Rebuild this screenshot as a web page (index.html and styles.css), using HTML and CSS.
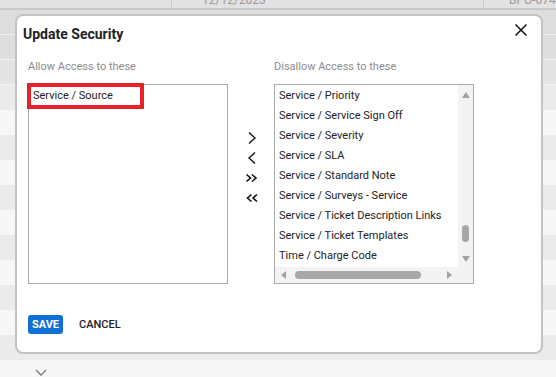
FILE: index.html
```html
<!DOCTYPE html>
<html lang="en">
<head>
    <meta charset="UTF-8">
    <meta name="viewport" content="width=device-width, initial-scale=1.0">
    <title>Update Security</title>
    <link rel="stylesheet" href="styles.css">
</head>
<body>
    <!-- table behind the modal -->
    <div class="grid-bg">
        <div class="grid-head">
            <div class="cell cell-a"></div>
            <div class="cell cell-b">12/12/2023</div>
            <div class="cell cell-c">BPO-0747</div>
        </div>
        <div class="grid-row dark"></div>
        <div class="grid-row dark"></div>
        <div class="grid-row mid"></div>
        <div class="grid-row odd"></div>
        <div class="grid-row even"></div>
        <div class="grid-row odd"></div>
        <div class="grid-row even"></div>
        <div class="grid-row odd"></div>
        <div class="grid-row even"></div>
        <div class="grid-row odd"></div>
        <div class="grid-row even"></div>
        <div class="grid-row odd"></div>
        <div class="grid-row even"></div>
        <div class="grid-row odd"></div>
        <div class="grid-foot">
            <svg width="12" height="7" viewBox="0 0 12 7"><path d="M1 1l5 5 5-5" fill="none" stroke="#7a7a7a" stroke-width="1.3"/></svg>
        </div>
    </div>

    <div class="dialog">
        <div class="dialog-head">
            <div class="dialog-title">Update Security</div>
            <button class="close-btn" aria-label="Close">
                <svg width="14" height="14" viewBox="0 0 14 14"><path d="M1.5 1.5l11 11M12.5 1.5l-11 11" stroke="#111" stroke-width="1.5"/></svg>
            </button>
        </div>

        <div class="transfer">
            <div class="col-label">Allow Access to these</div>
            <div></div>
            <div class="col-label">Disallow Access to these</div>

            <div class="list-box allow">
                <div class="list-item selected">Service / Source</div>
            </div>

            <div class="move-btns">
                <button class="move-btn"><svg width="10" height="14" viewBox="0 0 10 14"><path d="M2 1.5l6 5.5-6 5.5" fill="none" stroke="#111" stroke-width="1.4"/></svg></button>
                <button class="move-btn"><svg width="10" height="14" viewBox="0 0 10 14"><path d="M8 1.5l-6 5.5 6 5.5" fill="none" stroke="#111" stroke-width="1.4"/></svg></button>
                <button class="move-btn"><svg width="14" height="10" viewBox="0 0 14 10"><path d="M1.5 1.5l4 3.5-4 3.5M7 1.5l4 3.5-4 3.5" fill="none" stroke="#111" stroke-width="1.6"/></svg></button>
                <button class="move-btn"><svg width="14" height="10" viewBox="0 0 14 10"><path d="M6.5 1.5l-4 3.5 4 3.5M12 1.5l-4 3.5 4 3.5" fill="none" stroke="#111" stroke-width="1.6"/></svg></button>
            </div>

            <div class="list-box disallow">
                <div class="list-scroll">
                    <div class="list-item">Service / Priority</div>
                    <div class="list-item">Service / Service Sign Off</div>
                    <div class="list-item">Service / Severity</div>
                    <div class="list-item">Service / SLA</div>
                    <div class="list-item">Service / Standard Note</div>
                    <div class="list-item">Service / Surveys - Service</div>
                    <div class="list-item">Service / Ticket Description Links</div>
                    <div class="list-item">Service / Ticket Templates</div>
                    <div class="list-item">Time / Charge Code</div>
                </div>
                <div class="vbar">
                    <span class="tri up"></span>
                    <div class="vtrack"><span class="vthumb"></span></div>
                    <span class="tri down"></span>
                </div>
                <div class="hbar">
                    <span class="tri left"></span>
                    <div class="htrack"><span class="hthumb"></span></div>
                    <span class="tri right"></span>
                </div>
                <div class="corner"></div>
            </div>
        </div>

        <div class="dialog-actions">
            <button class="btn-save">SAVE</button>
            <button class="btn-cancel">CANCEL</button>
        </div>
    </div>
</body>
</html>
```

FILE: styles.css
```css
* {
    margin: 0;
    padding: 0;
    box-sizing: border-box;
}

body {
    font-family: Roboto, 'Liberation Sans', Arial, sans-serif;
    width: 556px;
    height: 377px;
    overflow: hidden;
    position: relative;
    background: #f7f7f7;
    color: #222;
}

button {
    font-family: inherit;
    background: none;
    border: none;
    cursor: pointer;
}

/* background table */
.grid-bg {
    display: flex;
    flex-direction: column;
}

.grid-head {
    height: 10px;
    flex-shrink: 0;
    display: flex;
    background: #e2e2e2;
    border-bottom: 2px solid #c9c9c9;
    overflow: hidden;
}

.cell {
    font-size: 12px;
    line-height: 14px;
    color: #9a9a9a;
    margin-top: -7px;
    border-right: 1px solid #cbcbcb;
    padding-left: 30px;
    flex-shrink: 0;
    white-space: nowrap;
}

.cell-a { width: 172px; }
.cell-b { width: 312px; }
.cell-c { flex: 1; border-right: none; padding-left: 25px; }

.grid-row {
    height: 25px;
    flex-shrink: 0;
    border-bottom: 1px solid #f1f1f1;
}

.grid-row.dark { background: #dedede; }
.grid-row.mid { background: #e4e4e4; }
.grid-row.odd { background: #ebebeb; border-bottom: none; }
.grid-row.even { background: #f7f7f7; border-bottom: none; }

.grid-foot {
    height: 30px;
    flex-shrink: 0;
    background: #f7f7f7;
    padding: 9px 0 0 35px;
}

.grid-foot svg {
    display: block;
}

/* modal */
.dialog {
    position: absolute;
    left: 15px;
    top: 14px;
    width: 528px;
    height: 340px;
    background: #fff;
    border: 2px solid #c3c3c3;
    border-radius: 8px;
}

.dialog-head {
    display: flex;
    justify-content: space-between;
    align-items: flex-start;
    margin-top: 7px;
    padding: 0 13px 0 6px;
}

.dialog-title {
    font-size: 14px;
    font-weight: 700;
    line-height: 20px;
    margin-top: 1px;
    color: #222;
}

.close-btn {
    width: 14px;
    height: 14px;
    display: flex;
}

.transfer {
    display: grid;
    grid-template-columns: 200px 46px 200px;
    row-gap: 10px;
    margin-top: 16px;
    padding-left: 11px;
}

.col-label {
    font-size: 11px;
    line-height: 14px;
    color: #8c8c8c;
}

.list-box {
    height: 200px;
    border: 1px solid #ababab;
    font-size: 11px;
}

.list-item {
    line-height: 20px;
    height: 20px;
    padding-left: 4px;
    white-space: nowrap;
    color: #222;
}

.allow .list-item.selected {
    width: 109px;
    height: 18px;
    line-height: 18px;
    margin: 2px;
    padding-left: 2px;
    outline: 4px solid #e8202a;
}

.move-btns {
    display: flex;
    flex-direction: column;
    align-items: center;
    padding-top: 44px;
}

.move-btn {
    height: 20px;
    width: 20px;
    display: flex;
    align-items: center;
    justify-content: center;
    margin-left: 1px;
}

.disallow {
    display: grid;
    grid-template-columns: 1fr 15px;
    grid-template-rows: 1fr 16px;
}

.list-scroll {
    overflow: hidden;
    padding-top: 1px;
}

.vbar {
    background: #f3f3f3;
    display: flex;
    flex-direction: column;
    align-items: center;
    padding: 7px 0 5px;
}

.vtrack {
    flex: 1;
    position: relative;
    width: 7px;
}

.vthumb {
    position: absolute;
    left: 0;
    top: 127px;
    width: 7px;
    height: 17px;
    border-radius: 4px;
    background: #a8a8a8;
}

.hbar {
    background: #f3f3f3;
    display: flex;
    align-items: center;
    padding: 0 6px 0 6px;
}

.htrack {
    flex: 1;
    position: relative;
    height: 8px;
}

.hthumb {
    position: absolute;
    top: 0;
    left: 9px;
    width: 126px;
    height: 8px;
    border-radius: 4px;
    background: #a8a8a8;
}

.corner {
    background: #f3f3f3;
}

.tri {
    width: 0;
    height: 0;
    display: block;
}

.tri.up {
    border-left: 4px solid transparent;
    border-right: 4px solid transparent;
    border-bottom: 6px solid #a3a3a3;
}

.tri.down {
    border-left: 4px solid transparent;
    border-right: 4px solid transparent;
    border-top: 6px solid #a3a3a3;
}

.tri.left {
    border-top: 4px solid transparent;
    border-bottom: 4px solid transparent;
    border-right: 5px solid #a3a3a3;
}

.tri.right {
    border-top: 4px solid transparent;
    border-bottom: 4px solid transparent;
    border-left: 5px solid #a3a3a3;
}

.dialog-actions {
    display: flex;
    align-items: center;
    gap: 16px;
    margin-top: 31px;
    padding-left: 11px;
}

.btn-save {
    width: 35px;
    height: 19px;
    border-radius: 3px;
    background: #1170d6;
    color: #fff;
    font-size: 11px;
    font-weight: 700;
}

.btn-cancel {
    font-size: 11px;
    font-weight: 500;
    color: #222;
}
```
